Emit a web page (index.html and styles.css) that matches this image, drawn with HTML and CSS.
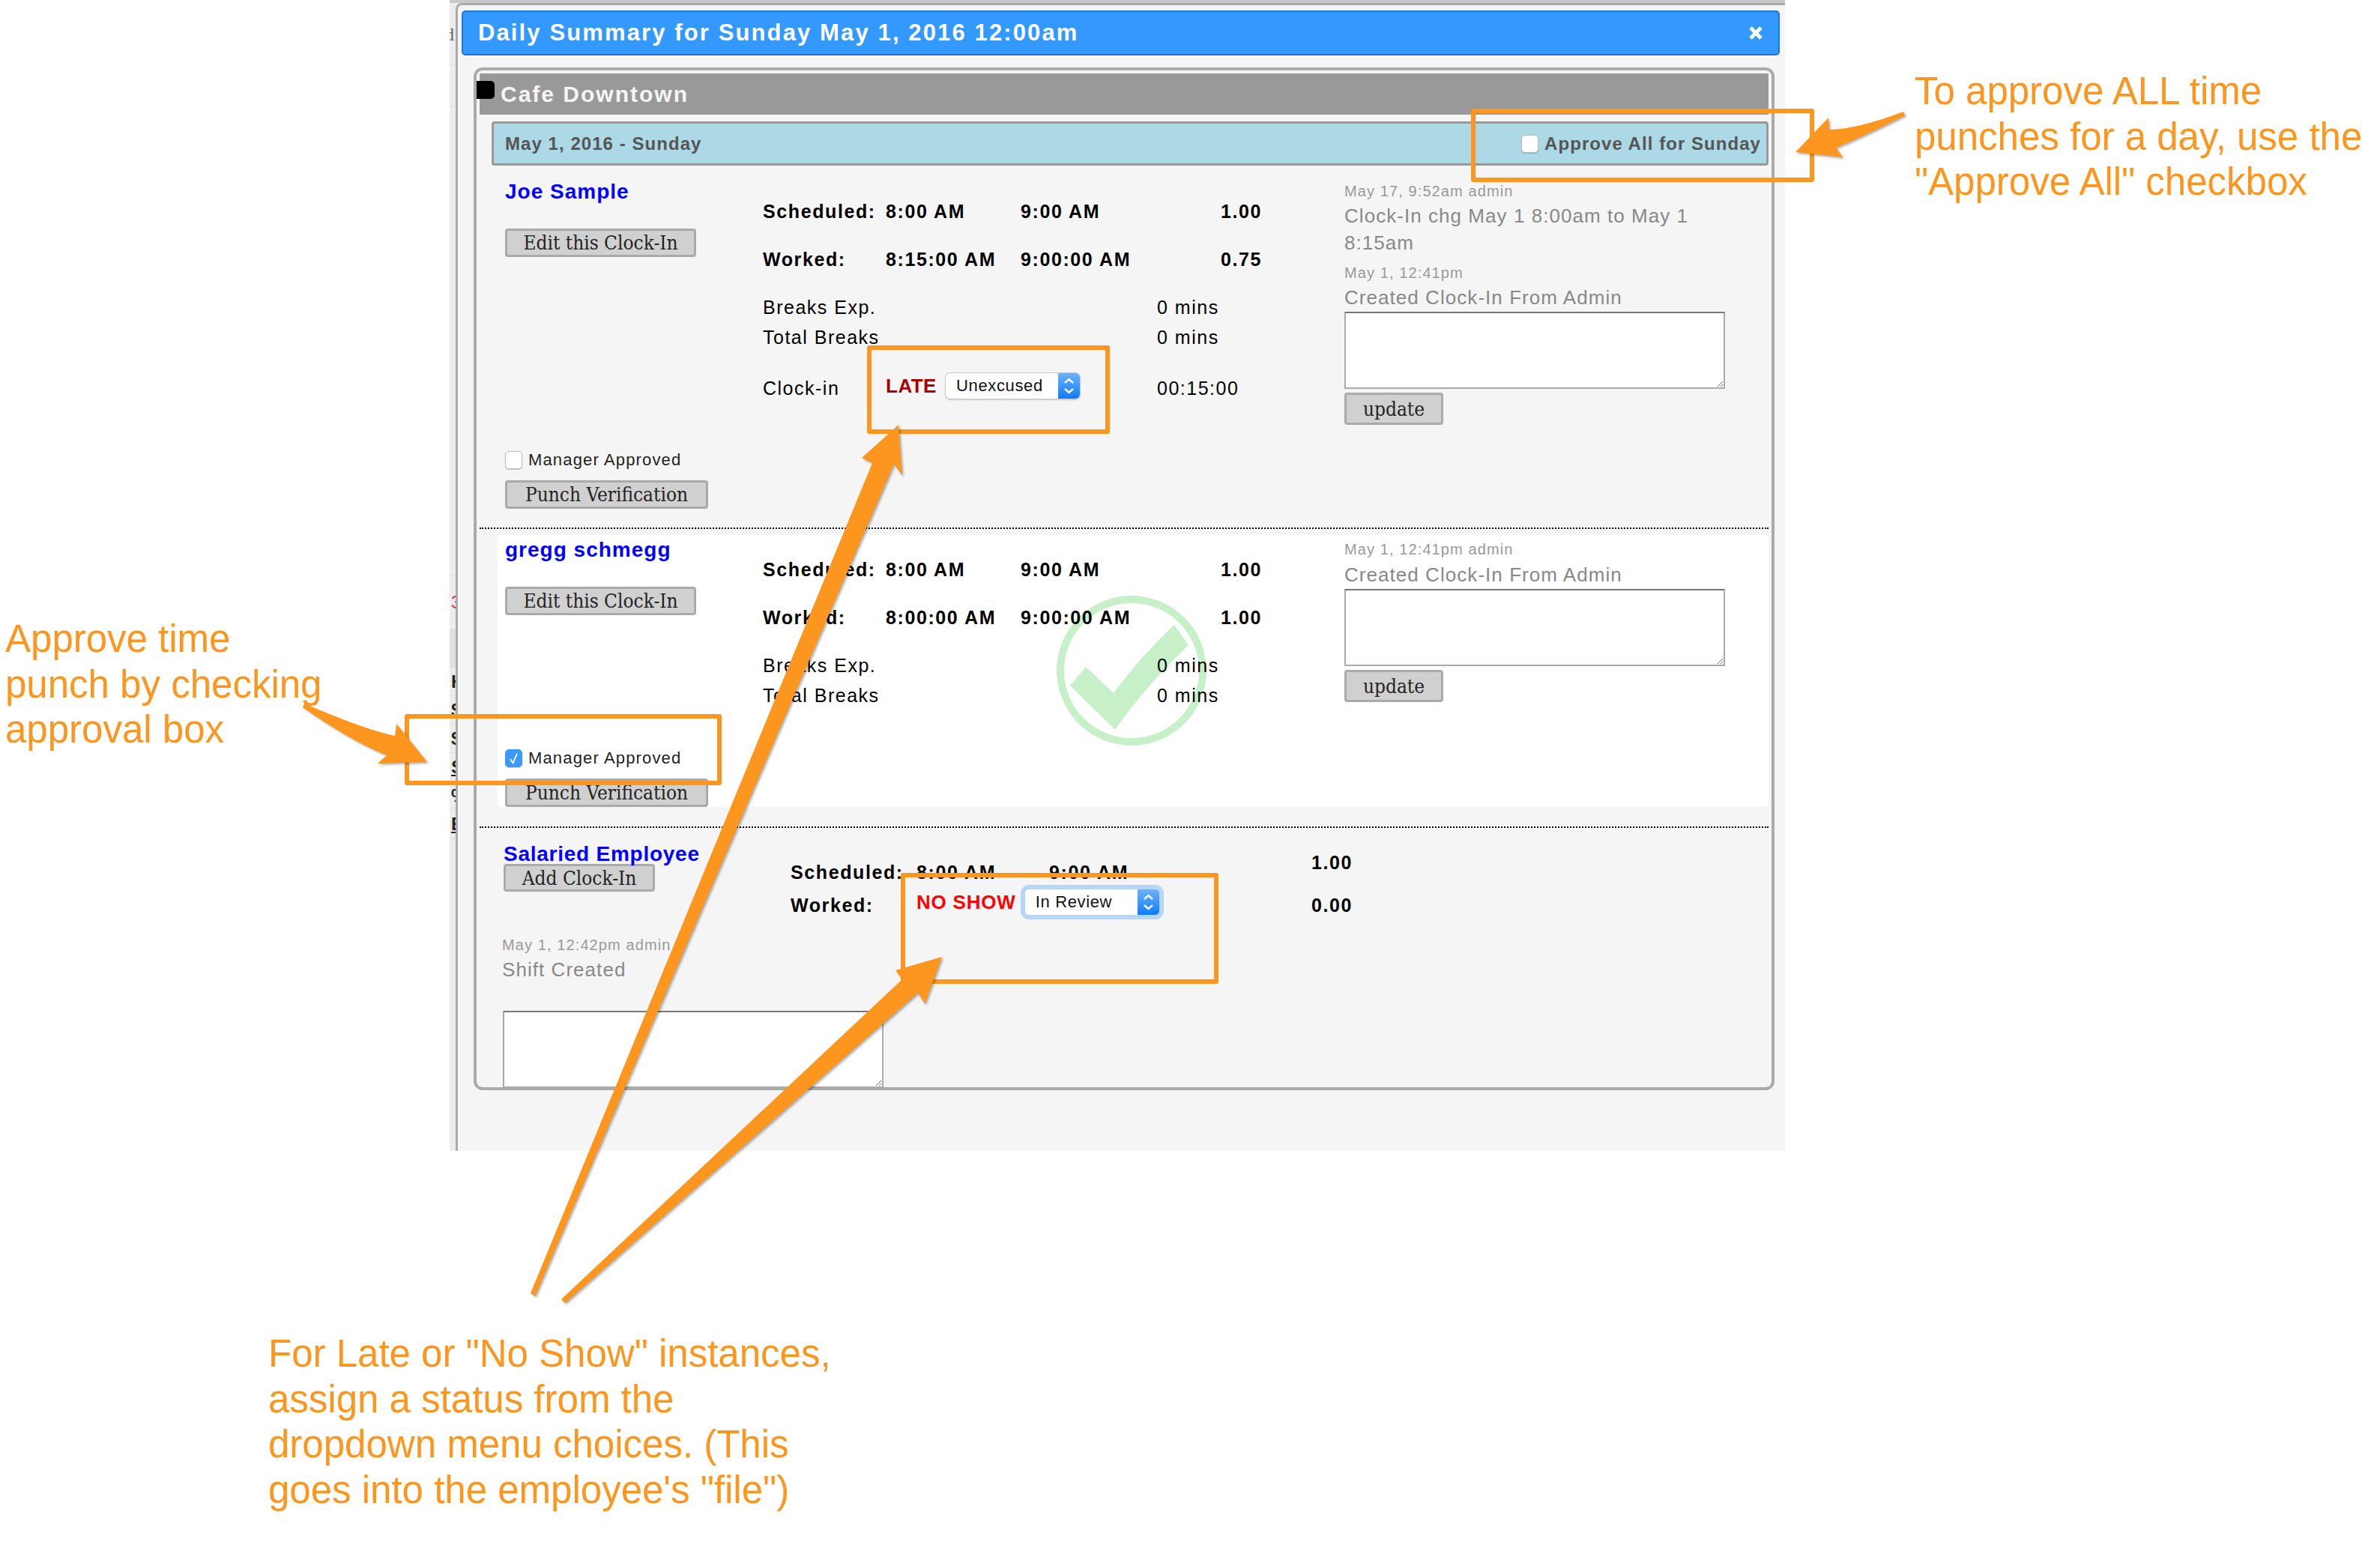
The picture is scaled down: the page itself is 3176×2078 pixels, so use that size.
FILE: index.html
```html
<!DOCTYPE html>
<html lang="en">
<head>
<meta charset="utf-8">
<title>Daily Summary</title>
<link rel="stylesheet" href="styles.css">
</head>
<body>
<div class="stage">
  <div class="app">
    <div class="strip">
      <div class="frag frag-d">d</div>
      <div class="rule rule-a"></div>
      <div class="rule rule-b"></div>
      <div class="rule rule-c"></div>
      <div class="frag frag-3">3</div>
      <div class="strip-block"></div>
      <div class="frag frag-b">H</div>
      <div class="frag frag-b">$</div>
      <div class="frag frag-b">$</div>
      <div class="frag frag-b frag-u">S</div>
      <div class="frag frag-b">%</div>
      <div class="frag frag-b frag-u">E</div>
    </div>
    <div class="modal">
      <header class="modal-head">
        <span>Daily Summary for Sunday May 1, 2016 12:00am</span>
        <svg class="close" viewBox="0 0 20 20" aria-hidden="true"><path d="M3 3 L17 17 M17 3 L3 17"/></svg>
      </header>
      <section class="panel">
        <div class="loc-bar"><span class="loc-mark"></span>Cafe Downtown</div>
        <div class="day-bar">
          <span>May 1, 2016 - Sunday</span>
          <label class="approve-all"><span class="check"></span>Approve All for Sunday</label>
        </div>

        <div class="row row-one">
          <div class="col-left">
            <a class="name">Joe Sample</a>
            <button class="btn btn-edit">Edit this Clock-In</button>
            <label class="approved approved-one"><span class="check"></span>Manager Approved</label>
            <button class="btn btn-punch">Punch Verification</button>
          </div>
          <div class="col-mid">
            <div class="times"><span>Scheduled:</span><span>8:00 AM</span><span>9:00 AM</span><span>1.00</span></div>
            <div class="times times-next"><span>Worked:</span><span>8:15:00 AM</span><span>9:00:00 AM</span><span>0.75</span></div>
            <div class="line line-first"><span>Breaks Exp.</span><span>0 mins</span></div>
            <div class="line line-second"><span>Total Breaks</span><span>0 mins</span></div>
            <div class="clock">
              <span>Clock-in</span>
              <span class="status"><b class="late">LATE</b>
                <span class="select"><span class="select-text">Unexcused</span><span class="stepper"><svg viewBox="0 0 29 34" aria-hidden="true"><path d="M9 13 L14.5 8 L20 13 M9 21 L14.5 26 L20 21"/></svg></span></span>
              </span>
              <span>00:15:00</span>
            </div>
          </div>
          <div class="col-right col-right-one">
            <div class="note-meta">May 17, 9:52am admin</div>
            <div class="note-text note-wrap">Clock-In chg May 1 8:00am to May 1 8:15am</div>
            <div class="note-meta note-meta-next">May 1, 12:41pm</div>
            <div class="note-text">Created Clock-In From Admin</div>
            <textarea class="note-box" readonly></textarea>
            <button class="btn btn-update">update</button>
          </div>
        </div>
        <div class="dots"></div>

        <div class="row row-two">
          <svg class="tick" viewBox="0 0 220 220" aria-hidden="true">
            <circle cx="110" cy="111" r="95"/>
            <path class="tick-mark" d="M28 131 L49 106 L86 141 Q122 92 167 50 L186 77 Q130 130 88 190 Z"/>
          </svg>
          <div class="col-left">
            <a class="name">gregg schmegg</a>
            <button class="btn btn-edit">Edit this Clock-In</button>
            <label class="approved approved-two"><span class="check check-on"><svg viewBox="0 0 22 24" aria-hidden="true"><path d="M6 13 L10 19 L16 5"/></svg></span>Manager Approved</label>
            <button class="btn btn-punch">Punch Verification</button>
          </div>
          <div class="col-mid">
            <div class="times"><span>Scheduled:</span><span>8:00 AM</span><span>9:00 AM</span><span>1.00</span></div>
            <div class="times times-next"><span>Worked:</span><span>8:00:00 AM</span><span>9:00:00 AM</span><span>1.00</span></div>
            <div class="line line-first"><span>Breaks Exp.</span><span>0 mins</span></div>
            <div class="line line-second"><span>Total Breaks</span><span>0 mins</span></div>
          </div>
          <div class="col-right col-right-two">
            <div class="note-meta">May 1, 12:41pm admin</div>
            <div class="note-text">Created Clock-In From Admin</div>
            <textarea class="note-box" readonly></textarea>
            <button class="btn btn-update">update</button>
          </div>
        </div>
        <div class="dots dots-two"></div>

        <div class="row-three">
          <div class="col-left-three">
            <a class="name name-three">Salaried Employee</a>
            <button class="btn btn-add">Add Clock-In</button>
            <div class="note-meta meta-three">May 1, 12:42pm admin</div>
            <div class="note-text text-three">Shift Created</div>
            <textarea class="note-box box-three" readonly></textarea>
          </div>
          <div class="col-mid-three">
            <div class="times-three"><span>Scheduled:</span><span>8:00 AM</span><span>9:00 AM</span><span class="hours-up">1.00</span></div>
            <div class="times-three times-three-next"><span>Worked:</span>
              <span class="status status-three"><b class="noshow">NO SHOW</b>
                <span class="select select-focus"><span class="select-text">In Review</span><span class="stepper"><svg viewBox="0 0 29 34" aria-hidden="true"><path d="M9 13 L14.5 8 L20 13 M9 21 L14.5 26 L20 21"/></svg></span></span>
              </span>
              <span class="hours-flat">0.00</span>
            </div>
          </div>
        </div>
      </section>
    </div>
  </div>

  <svg class="marks" viewBox="0 0 3176 2078" aria-hidden="true">
    <rect class="frame" x="1160" y="464" width="318" height="112"/>
    <rect class="frame" x="1966" y="148" width="452" height="92"/>
    <rect class="frame" x="543" y="956" width="417" height="89"/>
    <rect class="frame" x="1205" y="1168" width="418" height="142"/>
    <g class="arrows">
      <path d="M708 1726 L1164 618 L1150 611 L1199 567 L1204 635 L1193 619 L714 1730 Z"/>
      <path d="M749 1734 L1204 1307 L1195 1295 L1257 1277 L1234 1340 L1225 1325 L754 1739 Z"/>
      <path d="M2540 149 L2542 154 Q2480 185 2450 197 L2459 210 L2396 203 L2440 157 L2441 173 Q2480 172 2540 149 Z"/>
      <path d="M406 939 L404 944 Q470 990 516 1008 L504 1019 L570 1017 L529 966 L527 982 Q490 975 406 939 Z"/>
    </g>
  </svg>

  <p class="note note-right">To approve ALL time<br>punches for a day, use the<br>"Approve All" checkbox</p>
  <p class="note note-left">Approve time<br>punch by checking<br>approval box</p>
  <p class="note note-bottom">For Late or "No Show" instances,<br>assign a status from the<br>dropdown menu choices. (This<br>goes into the employee's "file")</p>
</div>
</body>
</html>
```

FILE: styles.css
```css
* { box-sizing: border-box; }
html, body { margin: 0; padding: 0; background: #fff; }
body { font-family: "Liberation Sans", Arial, sans-serif; color: #000; }

.stage { position: relative; width: 3176px; height: 2078px; padding-left: 600px; overflow: hidden; }

.app { display: flex; width: 1782px; height: 1536px; background: #f5f5f5; border-top: 4px solid #c8c8c8; }

/* page behind the modal, only a sliver shows */
.strip { width: 8px; flex: none; background: #ececec; overflow: hidden; display: flex; flex-direction: column; }
.frag { height: 38px; line-height: 38px; padding-left: 2px; font-size: 24px; white-space: nowrap; flex: none; }
.frag-d { margin-top: 27px; height: 30px; line-height: 30px; color: #666; font-family: "Liberation Serif", serif; margin-left: -8px; }
.frag-3 { margin-top: 17px; height: 38px; color: #e33; }
.frag-b { font-weight: bold; color: #222; border-bottom: 1px solid #ddd; }
.frag-u { text-decoration: underline; }
.rule { flex: none; height: 1px; background: #ddd; }
.rule-a { margin-top: 25px; }
.rule-b { margin-top: 55px; }
.rule-c { margin-top: 624px; }
.strip-block { flex: none; height: 52px; margin-top: 16px; background: #e0e0e0; }

.modal { flex: 1; min-width: 0; padding: 7px 7px 0 5px; border-left: 3px solid #aaa; border-top: 3px solid #aaa; border-top-left-radius: 8px; position: relative; }

.modal-head { height: 60px; display: flex; align-items: center; justify-content: space-between; padding: 0 20px; background: #3399ff; border: 2px solid #1c78d8; border-radius: 5px; color: #fff; font-size: 31px; font-weight: bold; letter-spacing: 2.12px; }
.close { width: 20px; height: 20px; }
.close path { fill: none; stroke: #fff; stroke-width: 5; }

.panel { width: 1736px; height: 1365px; margin: 16px 0 0 16px; padding: 4px 4px 0; border: 4px solid #aaa; border-radius: 12px; overflow: hidden; }

.loc-bar { position: relative; height: 55px; line-height: 55px; padding-left: 28px; background: #999; color: #f5f5f5; font-size: 30px; font-weight: bold; letter-spacing: 2px; }
.loc-mark { position: absolute; left: -4px; top: 10px; width: 24px; height: 24px; background: #000; border-radius: 0 5px 5px 0; }

.day-bar { display: flex; align-items: center; justify-content: space-between; height: 59px; margin: 9px 0 0 16px; padding: 0 7px 0 15px; background: #add8e6; border: 3px solid #999; border-radius: 4px; color: #555; font-size: 24px; font-weight: bold; letter-spacing: 1.05px; }
.approve-all { display: flex; align-items: center; gap: 8px; }

.check { display: inline-block; flex: none; width: 23px; height: 24px; background: #fff; border: 1px solid #bbb; border-radius: 5px; box-shadow: 0 1px 1px rgba(0,0,0,.2); }
.check-on { background: #3b99fc; border-color: #3b99fc; }
.check-on svg { display: block; width: 100%; height: 100%; }
.check-on path { fill: none; stroke: #fff; stroke-width: 2; }

.row { display: grid; grid-template-columns: 344px 776px 1fr; }
.row-one { height: 483px; padding-left: 34px; }
.row-two { position: relative; height: 363px; margin: 8px 0 0 24px; padding-left: 10px; background: #fff; border-radius: 6px; }

.tick { position: absolute; left: 736px; top: 70px; width: 220px; height: 220px; }
.tick circle { fill: none; stroke: #c8f0c8; stroke-width: 10; }
.tick-mark { fill: #c8f0c8; }

.dots { height: 2px; border-top: 2px dotted #000; }
.dots-two { margin-top: 26px; }

.col-left, .col-mid, .col-right { position: relative; display: flex; flex-direction: column; align-items: flex-start; }
.row-one .col-left { padding-top: 17px; }
.row-two .col-left { padding-top: 2px; }
.row-one .col-mid { padding-top: 45px; }
.row-two .col-mid { padding-top: 30px; }

.name { display: block; color: #00f; font-size: 28px; font-weight: bold; line-height: 36px; letter-spacing: 1px; white-space: nowrap; }
.name-three { letter-spacing: .75px; }

.btn { display: block; padding: 0; background: #d0d0d0; border: 3px solid #aaa; border-radius: 4px; color: #222; font-family: "DejaVu Serif", "Liberation Serif", serif; font-stretch: condensed; font-size: 26px; line-height: 1; letter-spacing: 0; white-space: nowrap; }
.btn-edit { width: 255px; height: 38px; margin-top: 31px; }
.btn-punch { width: 271px; height: 38px; margin-top: 15px; }
.btn-update { width: 132px; height: 43px; margin-top: 5px; }
.btn-add { width: 202px; height: 37px; margin-top: -5px; }

.approved { display: flex; align-items: center; gap: 8px; height: 24px; font-size: 22px; letter-spacing: 1.15px; color: #222; }
.approved-one { margin-top: 259px; }
.approved-two { margin-top: 179px; }

.times, .times-three { display: grid; align-items: center; height: 32px; font-size: 25px; font-weight: bold; letter-spacing: 1.6px; white-space: nowrap; }
.times { grid-template-columns: 164px 180px 267px 1fr; width: 100%; }
.times-next { margin-top: 32px; }

.line { display: grid; grid-template-columns: 526px 1fr; width: 100%; height: 32px; align-items: center; font-size: 25px; letter-spacing: 1.5px; white-space: nowrap; }
.line-first { margin-top: 32px; }
.line-second { margin-top: 8px; }

.clock { display: grid; grid-template-columns: 164px 362px 1fr; width: 100%; height: 32px; margin-top: 36px; align-items: center; font-size: 25px; letter-spacing: 1.5px; white-space: nowrap; }

.status { display: flex; align-items: center; gap: 12px; margin-top: -6px; }
.late { color: #a00; font-size: 26px; letter-spacing: .5px; }
.noshow { color: #f00; font-size: 26px; letter-spacing: .8px; }

.select { display: flex; flex: none; width: 179px; height: 34px; background: #fff; border-radius: 6px; box-shadow: 0 0 0 1px #c8c8c8, 0 2px 2px rgba(0,0,0,.18); overflow: hidden; font-size: 22px; font-weight: normal; letter-spacing: .65px; line-height: 34px; color: #111; }
.select-focus { box-shadow: 0 0 0 6px #b6d5f8; border-radius: 5px; }
.select-text { flex: 1; padding-left: 14px; }
.stepper { flex: none; width: 29px; height: 34px; background: linear-gradient(#6cb3fa, #0f7bff); }
.stepper svg { display: block; width: 29px; height: 34px; }
.stepper path { fill: none; stroke: #fff; stroke-width: 2.4; }

.col-right-one { padding-top: 20px; }
.col-right-two { padding-top: 5px; }
.note-meta { height: 28px; line-height: 28px; font-size: 20px; letter-spacing: 1.1px; color: #999; white-space: nowrap; }
.note-meta-next { margin-top: 8px; }
.note-text { line-height: 36px; font-size: 26px; letter-spacing: 1.05px; color: #888; }
.col-right-one .note-text { width: 508px; margin-top: 1px; }
.col-right-two .note-text { margin-top: 2px; }
.note-box { display: block; width: 508px; height: 103px; margin: 1px 0 0; padding: 0; background: #fff; border: 2px solid #aaa; border-top-color: #777; border-radius: 0; }

.row-three { display: grid; grid-template-columns: 383px 1fr; padding-left: 32px; }
.col-left-three { padding-top: 17px; }
.col-left-three .btn-add { margin-top: -5px; }
.meta-three { margin: 57px 0 0 -2px; }
.text-three { margin: 1px 0 0 -2px; }
.box-three { margin: 37px 0 0 -1px; }

.col-mid-three { padding-top: 43px; }
.times-three { grid-template-columns: 168px 177px 350px 1fr; }
.times-three-next { margin-top: 12px; }
.hours-up { margin-top: -26px; }
.status-three { grid-column: 2 / 4; gap: 12px; margin-top: -8px; }
.hours-flat { grid-column: 4; }

/* annotation layer */
.marks { position: absolute; left: 0; top: 0; width: 3176px; height: 2078px; pointer-events: none; }
.frame { fill: none; stroke: #fd961e; stroke-width: 6; stroke-linejoin: round; }
.arrows path { fill: #fd961e; filter: drop-shadow(2px 2px 1.5px rgba(0,0,0,.3)); }

.note { position: absolute; margin: 0; color: #fd961e; font-size: 51px; line-height: 60.7px; letter-spacing: 0; white-space: nowrap; }
.note-right { left: 2555px; top: 92px; }
.note-left { left: 7px; top: 823px; }
.note-bottom { left: 358px; top: 1777px; }
```
